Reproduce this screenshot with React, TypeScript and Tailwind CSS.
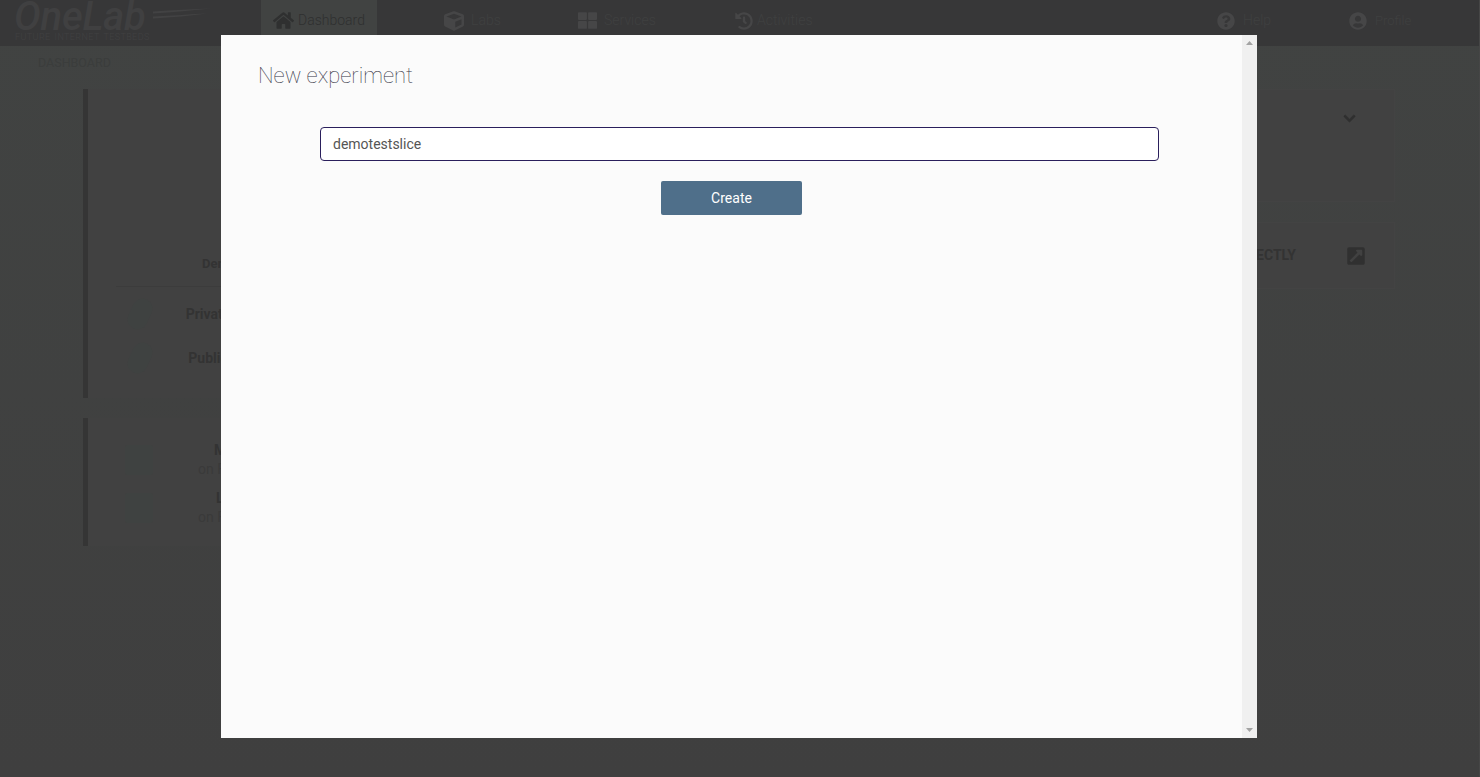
import { FaHome, FaCube, FaThLarge, FaHistory, FaQuestionCircle, FaUserCircle, FaChevronDown, FaExternalLinkSquareAlt } from "react-icons/fa";

function NavItem({ icon, label, className }: { icon: React.ReactNode; label: string; className: string }) {
  return (
    <div className={"flex items-center h-[41px] font-light " + className}>
      {icon}
      <span>{label}</span>
    </div>
  );
}

function Header() {
  return (
    <header className="h-[46px] bg-[#373738] flex items-start shrink-0">
      <div className="w-[261px] shrink-0 pl-[14px] pt-[1px]">
        <div className="flex items-center h-[31px]">
          <span className="text-[40px] leading-[31px] font-medium italic text-[#404041] w-[139px] tracking-[-0.2px]">OneLab</span>
          <svg width="60" height="12" viewBox="0 0 60 12" className="mt-[-5px]" fill="#424243">
            <path d="M0 3.6 C20 2.4 40 1.2 59 0.6 C40 2.4 20 4.4 0 5.6Z" />
            <path d="M0 8.6 C20 7.4 38 6 54 5.4 C38 7.4 20 9.4 0 10.4Z" />
          </svg>
        </div>
        <div className="pl-[1px] text-[9px] leading-[10px] font-light tracking-[0.4px] [word-spacing:1.5px] text-[#414142] whitespace-nowrap">FUTURE INTERNET TESTBEDS</div>
      </div>
      <div className="h-[46px] w-[116px] bg-[#414342]">
        <NavItem
          className="pl-[12px] gap-[4px] text-[14px] text-[#2f3030]"
          icon={<FaHome className="text-[21px] text-[#2f3030]" />}
          label="Dashboard"
        />
      </div>
      <NavItem className="ml-[67px] w-[134px] gap-[7px] text-[14px] text-[#3f4040]" icon={<FaCube className="text-[20px] text-[#464647]" />} label="Labs" />
      <NavItem className="w-[157px] gap-[7px] text-[14px] text-[#3f4040]" icon={<FaThLarge className="text-[19px] text-[#464647]" />} label="Services" />
      <NavItem className="w-[482px] gap-[4px] text-[14px] text-[#3f4040]" icon={<FaHistory className="text-[18px] text-[#464647]" />} label="Activities" />
      <NavItem className="w-[132px] gap-[8px] text-[14px] text-[#3f4040]" icon={<FaQuestionCircle className="text-[18px] text-[#464647]" />} label="Help" />
      <NavItem className="gap-[8px] text-[13px] text-[#3f4040]" icon={<FaUserCircle className="text-[18px] text-[#464647]" />} label="Profile" />
    </header>
  );
}

function Row({ label }: { label: string }) {
  return (
    <div className="flex items-center h-[44px] pl-[14px]">
      <div className="w-[20px] h-[32px] rounded-full bg-[#3f4241] rotate-[25deg] shrink-0" />
      <div className="ml-[28px] w-[60px] text-center text-[14px] font-bold text-[#333333]">{label}</div>
    </div>
  );
}

function Page() {
  return (
    <div className="min-h-[777px] bg-gradient-to-b from-[#414342] to-[#3f3f3f] border-r border-[#464646] flex flex-col font-['Roboto',sans-serif]">
      <Header />
      <div className="pl-[38px] pt-[9px] h-[43px] text-[12.5px] leading-[16px] text-[#3b3d3c]">DASHBOARD</div>
      <div className="grid grid-cols-[652px_640px] gap-x-[20px] pl-[83px]">
        <div className="flex flex-col gap-[20px]">
          <section className="h-[309px] border-l-[5px] border-[#353535] bg-[#414141] pl-[28px] pt-[166px]">
            <div className="h-[32px] border-b border-[#3c3c3c] pl-[86px] text-[13px] leading-[18px] font-bold text-[#333333]">Demo</div>
            <div className="mt-[5px]">
              <Row label="Private" />
              <Row label="Public" />
            </div>
          </section>
          <section className="h-[128px] border-l-[5px] border-[#353535] bg-[#414141] pl-[37px] pt-[23px] flex flex-col gap-[10px]">
            {["M", "L"].map((t, i) => (
              <div key={t} className="flex items-center h-[38px]">
                <div className="w-[28px] h-[30px] rounded-[3px] bg-[#3f4241] shrink-0" />
                <div className="ml-[45px] text-[14px] leading-[19px] text-[#3a3a3a]">
                  <div className={"font-bold text-[#333333] " + (i === 0 ? "pl-[16px]" : "pl-[18px]")}>{t}</div>
                  <div>on F</div>
                </div>
              </div>
            ))}
          </section>
        </div>
        <div className="flex flex-col gap-[20px]">
          <section className="h-[113px] bg-[#414141] border border-[#434343] flex justify-end pr-[38px] pt-[22px]">
            <FaChevronDown className="text-[13px] text-[#2f2f2f] stroke-current stroke-[30px]" />
          </section>
          <section className="h-[67px] bg-[#414141] border border-[#434343] flex items-center justify-end gap-[50px] pr-[28px]">
            <span className="text-[14px] font-bold text-[#333333]">CONNECT DIRECTLY</span>
            <FaExternalLinkSquareAlt className="text-[20px] text-[#303030]" />
          </section>
        </div>
      </div>
    </div>
  );
}

function Modal() {
  return (
    <div className="absolute left-[221px] top-[35px] w-[1036px] h-[703px] bg-[#fbfbfb] flex font-['Roboto',sans-serif]">
      <div className="flex-1 pl-[37px] pt-[26px]">
        <h2 className="text-[22px] leading-[30px] font-thin text-[#333344]">New experiment</h2>
        <div className="mt-[36px] ml-[62px] w-[839px] h-[34px] rounded-[4px] border-[1.5px] border-[#2a1f5c] bg-white flex items-center pl-[12px] text-[14px] text-[#555555]">
          demotestslice
        </div>
        <button className="block mt-[20px] ml-[403px] w-[141px] h-[34px] rounded-[2px] bg-[#4f6f8a] text-[14px] text-white">Create</button>
      </div>
      <div className="w-[15px] bg-[#f0f0f0] flex flex-col justify-between items-center py-[6px]">
        <svg width="7" height="4" viewBox="0 0 7 4"><path d="M3.5 0L7 4H0Z" fill="#a3a3a3" /></svg>
        <svg width="7" height="4" viewBox="0 0 7 4"><path d="M0 0H7L3.5 4Z" fill="#a3a3a3" /></svg>
      </div>
    </div>
  );
}

export default function App() {
  return (
    <div className="relative h-[777px] overflow-hidden">
      <Page />
      <Modal />
    </div>
  );
}
